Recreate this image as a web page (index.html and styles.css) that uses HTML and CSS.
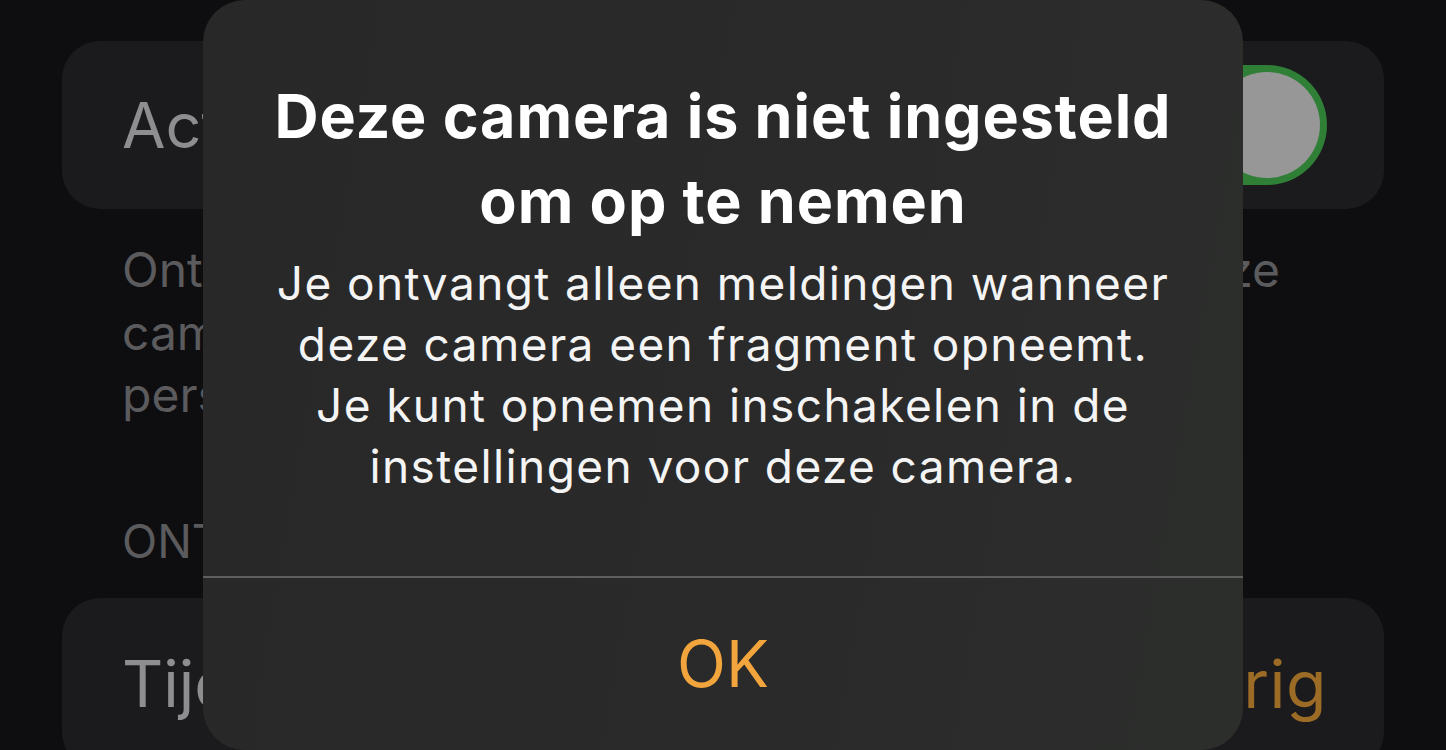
FILE: index.html
```html
<!DOCTYPE html>
<html lang="nl">
<head>
<meta charset="utf-8">
<title>Camera</title>
<link rel="stylesheet" href="styles.css">
</head>
<body>
<main class="screen">
  <section class="card card-top">
    <span class="label">Activiteitsmeldingen</span>
    <span class="toggle"><span class="knob"></span></span>
  </section>
  <p class="footnote"><span class="footnote-first">Ontvang meldingen bij activiteit gezien door deze</span>camera, zoals beweging van dieren of<br>personen.</p>
  <h2 class="section-title">ONTVANG MELDINGEN</h2>
  <section class="card card-bottom">
    <span class="label">Tijd</span>
    <span class="value">Langdurig</span>
  </section>
</main>

<div class="alert" role="alertdialog">
  <div class="alert-body">
    <h1 class="alert-title">Deze camera is niet ingesteld<br>om op te nemen</h1>
    <p class="alert-message">Je ontvangt alleen meldingen wanneer<br>deze camera een fragment opneemt.<br>Je kunt opnemen inschakelen in de<br>instellingen voor deze camera.</p>
  </div>
  <div class="alert-divider"></div>
  <button class="alert-button">OK</button>
</div>
</body>
</html>
```

FILE: styles.css
```css
html, body {
  margin: 0;
  padding: 0;
  height: 100%;
  overflow: hidden;
}

body {
  background: #0e0e10;
  font-family: Inter, "Noto Sans", "Liberation Sans", sans-serif;
  position: relative;
}

.screen {
  padding: 41px 62px 0 62px;
  display: flex;
  flex-direction: column;
}

.card {
  background: #1b1b1d;
  border-radius: 38px;
  display: flex;
  align-items: center;
  justify-content: space-between;
  padding: 0 57px 0 60px;
}

.card-top {
  height: 168px;
}

.card-bottom {
  height: 172px;
  margin-top: 27px;
}

.label {
  color: #8e8e90;
  font-size: 63px;
  white-space: nowrap;
}

.card-bottom .label {
  font-size: 64px;
}

.value {
  color: #9c6b26;
  font-size: 66px;
  letter-spacing: 0.5px;
  white-space: nowrap;
}

.toggle {
  width: 198px;
  height: 120px;
  border-radius: 60px;
  background: #2f7f36;
  display: flex;
  align-items: center;
  justify-content: flex-end;
  padding: 0 7px;
  box-sizing: border-box;
}

.knob {
  width: 106px;
  height: 106px;
  border-radius: 50%;
  background: #979797;
}

.footnote {
  margin: 30px 0 0 60px;
  color: #5b5b5e;
  font-size: 48px;
  line-height: 62.5px;
  white-space: nowrap;
}

.footnote-first {
  display: block;
  width: 1158px;
  white-space: normal;
  text-align: justify;
  text-align-last: justify;
}

.section-title {
  margin: 84px 0 0 60px;
  color: #5b5b5e;
  font-size: 46px;
  font-weight: 400;
  line-height: 60px;
  white-space: nowrap;
}

.alert {
  position: absolute;
  left: 203px;
  top: 0;
  width: 1040px;
  height: 750px;
  border-radius: 42px;
  background: linear-gradient(100deg, #282828 0%, #2a2a2a 60%, #2c2e2c 100%);
  display: flex;
  flex-direction: column;
  overflow: hidden;
}

.alert-body {
  padding-top: 74px;
  height: 577px;
  box-sizing: border-box;
  text-align: center;
}

.alert-title {
  margin: 0;
  color: #ffffff;
  font-size: 61px;
  font-weight: 700;
  letter-spacing: 0.9px;
  line-height: 85px;
  white-space: nowrap;
}

.alert-message {
  margin: 9px 0 0 0;
  color: #f4f4f4;
  font-size: 46px;
  font-weight: 400;
  letter-spacing: 1.4px;
  line-height: 61px;
  white-space: nowrap;
}

.alert-divider {
  height: 2px;
  flex: none;
  background: #5e5e5e;
}

.alert-button {
  display: block;
  flex: none;
  border: 0;
  background: transparent;
  color: #f2a53c;
  font-family: inherit;
  font-size: 64px;
  padding: 0;
  height: 172px;
  line-height: 172px;
  cursor: pointer;
}
```
